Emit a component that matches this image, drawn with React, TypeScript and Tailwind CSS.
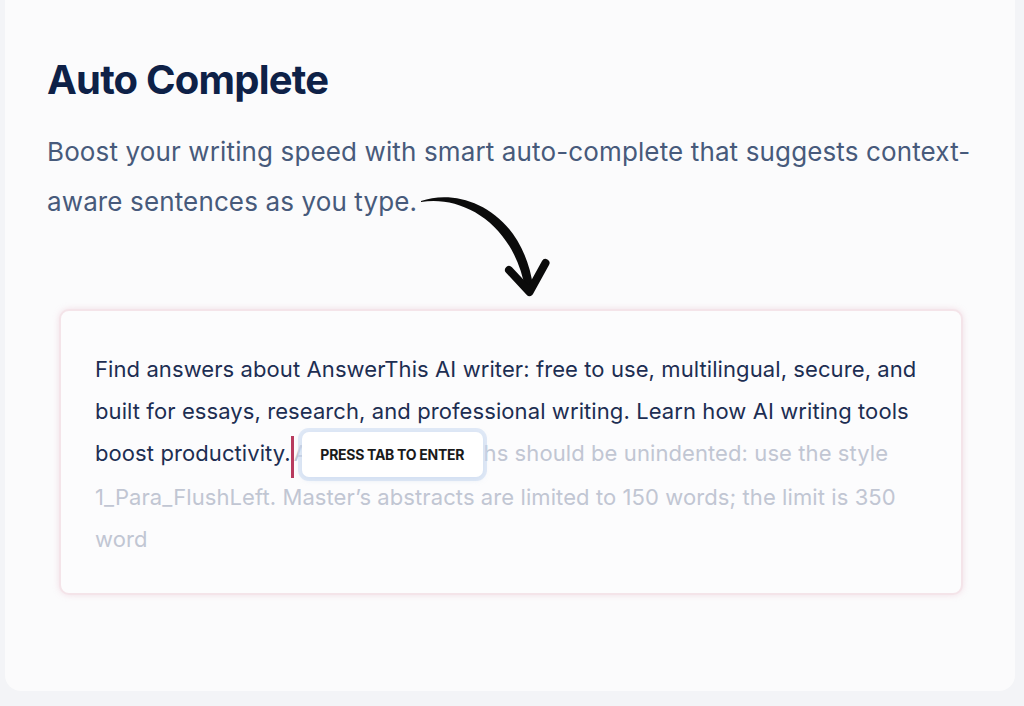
import React from 'react';

const ghost =
  'Abstract paragraphs should be unindented: use the style 1_Para_FlushLeft. Master\u2019s abstracts are limited to 150 words; the limit is 350 word';

function CurvedArrow() {
  return (
    <svg
      className="pointer-events-none absolute left-[406px] top-[190px]"
      width="145"
      height="112"
      viewBox="406 190 145 112"
      fill="none"
    >
      {/* tapered shaft */}
      <path
        d="M416 201 C 455 187, 518 210, 528.5 289 L 520.5 290.5 C 509 223, 457 195, 416 202 Z"
        fill="#0b0b0b"
      />
      {/* head */}
      <path
        d="M504 270 L 524.5 292 L 540.5 263"
        stroke="#0b0b0b"
        strokeWidth="8"
        strokeLinecap="round"
        strokeLinejoin="round"
      />
    </svg>
  );
}

export default function App() {
  return (
    <div className="flex h-[706px] w-full items-start overflow-hidden bg-[#f3f4f7] px-[5px] font-['Inter',sans-serif]">
      <div className="relative flex h-[691px] w-[1010px] flex-col rounded-b-[16px] bg-[#fbfbfc] pt-[60px]">
        <CurvedArrow />

        <div className="flex flex-col gap-[27px] px-[42px]">
          <h1 className="text-[40px] leading-[40px] font-bold tracking-[-0.02em] text-[#0e2147]">
            Auto Complete
          </h1>
          <p className="w-[930px] text-[26px] leading-[50px] tracking-[0.005em] text-[#475a7b]">
            Boost your writing speed with smart auto-complete that suggests context-aware sentences as you type.
          </p>
        </div>

        <div className="ml-[54px] mr-[52px] mt-[82px] h-[286px] rounded-[10px] border-2 border-[#f4e4e9] bg-[#fcfcfd] px-[34px] pt-[37px] shadow-[0_0_6px_rgba(226,170,190,0.35)]">
          <p className="text-[22px] leading-[42px] tracking-[0.004em] text-[#1d2e52]">
            Find answers about AnswerThis AI writer: free to use, multilingual, secure, and built for essays,
            research, and professional writing. Learn how AI writing tools boost productivity.
            <span className="relative inline-block h-[42px] w-[3px] translate-y-[2px] align-middle bg-[#b83b5e]">
              <span className="absolute left-[11px] top-[-4px] z-10 flex h-[45px] w-[181px] items-center justify-center rounded-[7px] bg-white text-[14px] leading-none font-bold tracking-[-0.02em] whitespace-nowrap text-[#1a1a1a] shadow-[0_0_0_4px_rgba(200,216,240,0.55),0_2px_6px_rgba(160,185,220,0.35)]">
                PRESS TAB TO ENTER
              </span>
            </span>
            <span className="text-[#c1c6d3]">{ghost}</span>
          </p>
        </div>
      </div>
    </div>
  );
}
